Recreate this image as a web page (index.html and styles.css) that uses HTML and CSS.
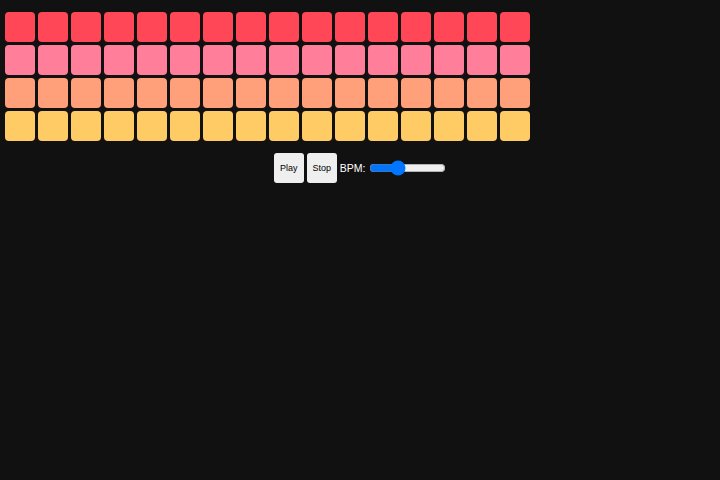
FILE: index.html
```html
<!DOCTYPE html>
<html>
<head>
<meta charset="utf-8">
<title>Step Sequencer</title>
<link rel="stylesheet" href="styles.css">
</head>
<body>
<div class="sequencer">
  <div class="grid">
    <div class="cell r1"></div><div class="cell r1"></div><div class="cell r1"></div><div class="cell r1"></div>
    <div class="cell r1"></div><div class="cell r1"></div><div class="cell r1"></div><div class="cell r1"></div>
    <div class="cell r1"></div><div class="cell r1"></div><div class="cell r1"></div><div class="cell r1"></div>
    <div class="cell r1"></div><div class="cell r1"></div><div class="cell r1"></div><div class="cell r1"></div>
    <div class="cell r2"></div><div class="cell r2"></div><div class="cell r2"></div><div class="cell r2"></div>
    <div class="cell r2"></div><div class="cell r2"></div><div class="cell r2"></div><div class="cell r2"></div>
    <div class="cell r2"></div><div class="cell r2"></div><div class="cell r2"></div><div class="cell r2"></div>
    <div class="cell r2"></div><div class="cell r2"></div><div class="cell r2"></div><div class="cell r2"></div>
    <div class="cell r3"></div><div class="cell r3"></div><div class="cell r3"></div><div class="cell r3"></div>
    <div class="cell r3"></div><div class="cell r3"></div><div class="cell r3"></div><div class="cell r3"></div>
    <div class="cell r3"></div><div class="cell r3"></div><div class="cell r3"></div><div class="cell r3"></div>
    <div class="cell r3"></div><div class="cell r3"></div><div class="cell r3"></div><div class="cell r3"></div>
    <div class="cell r4"></div><div class="cell r4"></div><div class="cell r4"></div><div class="cell r4"></div>
    <div class="cell r4"></div><div class="cell r4"></div><div class="cell r4"></div><div class="cell r4"></div>
    <div class="cell r4"></div><div class="cell r4"></div><div class="cell r4"></div><div class="cell r4"></div>
    <div class="cell r4"></div><div class="cell r4"></div><div class="cell r4"></div><div class="cell r4"></div>
  </div>
  <div class="controls">
    <button class="btn">Play</button>
    <button class="btn">Stop</button>
    <label class="bpm-label" for="bpm">BPM:</label>
    <input class="bpm" id="bpm" type="range" min="60" max="240" value="120">
  </div>
</div>
</body>
</html>
```

FILE: styles.css
```css
html, body {
  margin: 0;
  background: #111111;
  font-family: "Liberation Sans", Arial, sans-serif;
}

.sequencer {
  padding: 12px 0 0 5px;
}

.grid {
  display: grid;
  grid-template-columns: repeat(16, 30px);
  grid-auto-rows: 30px;
  gap: 3px;
}

.cell {
  border-radius: 4px;
}

.r1 { background: #ff4757; }
.r2 { background: #ff7f9b; }
.r3 { background: #ffa07a; }
.r4 { background: #fecb64; }

.controls {
  display: flex;
  align-items: center;
  justify-content: center;
  gap: 3px;
  margin: 12px 0 0 -5px;
}

.btn {
  width: 30px;
  height: 30px;
  padding: 0;
  border: none;
  border-radius: 3px;
  background: #efefef;
  color: #000;
  font-family: "Liberation Sans", Arial, sans-serif;
  font-size: 9px;
}

.bpm-label {
  color: #ffffff;
  font-size: 10.5px;
}

.bpm {
  width: 77px;
  margin: 0 0 0 1px;
}
```
